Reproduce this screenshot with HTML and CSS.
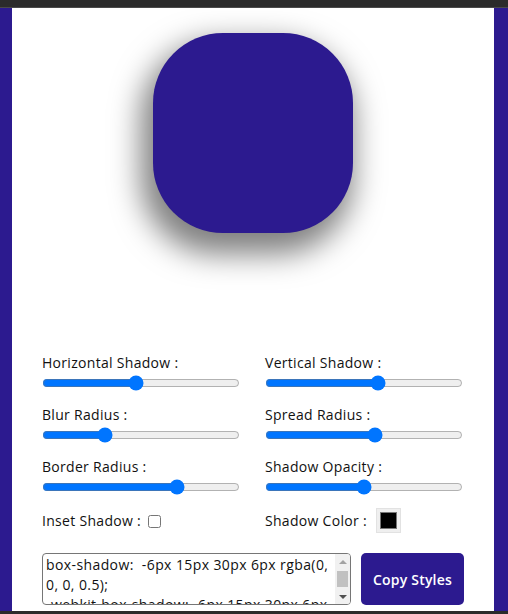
FILE: index.html
```html
<!DOCTYPE html>
<html lang="en">
<head>
<meta charset="utf-8">
<title>Box Shadow Generator</title>
<link rel="stylesheet" href="styles.css">
</head>
<body>
<div class="chrome chrome-top"></div>
<main class="page">
  <div class="card">
    <section class="preview">
      <div class="box"></div>
    </section>
    <section class="controls">
      <div class="control">
        <label class="label" for="h">Horizontal Shadow :</label>
        <input class="range" id="h" type="range" min="-100" max="100" value="-6">
      </div>
      <div class="control">
        <label class="label" for="v">Vertical Shadow :</label>
        <input class="range" id="v" type="range" min="-100" max="100" value="15">
      </div>
      <div class="control">
        <label class="label" for="b">Blur Radius :</label>
        <input class="range" id="b" type="range" min="0" max="100" value="30">
      </div>
      <div class="control">
        <label class="label" for="s">Spread Radius :</label>
        <input class="range" id="s" type="range" min="-50" max="50" value="6">
      </div>
      <div class="control">
        <label class="label" for="r">Border Radius :</label>
        <input class="range" id="r" type="range" min="0" max="100" value="70">
      </div>
      <div class="control">
        <label class="label" for="o">Shadow Opacity :</label>
        <input class="range" id="o" type="range" min="0" max="1" step="0.1" value="0.5">
      </div>
      <div class="control inline">
        <label class="label" for="i">Inset Shadow :</label>
        <input class="check" id="i" type="checkbox">
      </div>
      <div class="control inline">
        <label class="label" for="c">Shadow Color :</label>
        <input class="color" id="c" type="color" value="#000000">
      </div>
    </section>
    <section class="output">
      <div class="code-wrap">
        <textarea class="code" rows="2" readonly>box-shadow:  -6px 15px 30px 6px rgba(0, 0, 0, 0.5);
-webkit-box-shadow: -6px 15px 30px 6px rgba(0, 0, 0, 0.5);
-moz-box-shadow: -6px 15px 30px 6px rgba(0, 0, 0, 0.5);</textarea>
        <div class="scrollbar" aria-hidden="true">
          <span class="sb-btn sb-up"></span>
          <span class="sb-track"><span class="sb-thumb"></span></span>
          <span class="sb-btn sb-down"></span>
        </div>
      </div>
      <button class="copy" type="button">Copy Styles</button>
    </section>
  </div>
</main>
<div class="chrome chrome-bottom"></div>
</body>
</html>
```
FILE: styles.css
```css
* { box-sizing: border-box; }
html, body { margin: 0; padding: 0; }
body {
  font-family: "Open Sans", "DejaVu Sans", sans-serif;
  color: #111;
  background: #2c1a8f;
  height: 614px;
  overflow: hidden;
  display: flex;
  flex-direction: column;
}
.chrome { background: #2b2b2b; flex: none; }
.chrome-top { height: 8px; border-bottom: 1px solid #4a4a4a; }
.chrome-bottom { height: 3px; }
.page {
  flex: 1;
  padding: 0 14px 0 12px;
  background: #2c1a8f;
  display: flex;
}
.card {
  flex: 1;
  background: #fff;
  padding: 25px 30px 0 30px;
  display: flex;
  flex-direction: column;
  overflow: hidden;
}
.preview {
  display: flex;
  justify-content: center;
  margin-bottom: 119px;
}
.box {
  width: 200px;
  height: 200px;
  background: #2c1a8f;
  border-radius: 70px;
  box-shadow: -6px 15px 30px 6px rgba(0, 0, 0, 0.5);
}
.controls {
  display: grid;
  grid-template-columns: 198px 198px;
  column-gap: 25px;
  row-gap: 11px;
}
.control { display: flex; flex-direction: column; }
.control.inline { flex-direction: row; align-items: center; }
.label {
  font-size: 14px;
  line-height: 21px;
  letter-spacing: 0.3px;
}
.range {
  width: 198px;
  margin: 2px 0;
  accent-color: #0075ff;
}
.check {
  width: 13px;
  height: 13px;
  margin: 1px 0 0 7px;
}
.color {
  width: 25px;
  height: 25px;
  margin: 0 0 0 9px;
  padding: 3px;
  border: 1px solid #e2e2e2;
  background: #efefef;
  border-radius: 0;
}
.color::-webkit-color-swatch-wrapper { padding: 0; }
.color::-webkit-color-swatch { border: 1px solid #777; }
.output {
  margin-top: 20px;
  display: flex;
  gap: 10px;
  align-items: flex-start;
}
.code-wrap {
  position: relative;
  width: 309px;
  height: 52px;
  flex: none;
}
.code {
  display: block;
  width: 309px;
  height: 52px;
  resize: none;
  font-family: "Open Sans", "DejaVu Sans", sans-serif;
  font-size: 14px;
  letter-spacing: 0.4px;
  line-height: 20px;
  color: #111;
  border: 1px solid #767676;
  border-radius: 4px;
  padding: 1px 18px 1px 3px;
  overflow: hidden;
}
.scrollbar {
  position: absolute;
  top: 1px;
  right: 1px;
  bottom: 1px;
  width: 15px;
  background: #f1f1f1;
  border-radius: 0 3px 3px 0;
  display: flex;
  flex-direction: column;
}
.sb-btn {
  height: 15px;
  flex: none;
  display: flex;
  align-items: center;
  justify-content: center;
}
.sb-btn::before {
  content: "";
  width: 0;
  height: 0;
  border-left: 4px solid transparent;
  border-right: 4px solid transparent;
}
.sb-up::before { border-bottom: 4px solid #a3a3a3; }
.sb-down::before { border-top: 4px solid #505050; }
.sb-track {
  flex: 1;
  padding: 2px 2px 0;
}
.sb-thumb {
  display: block;
  height: 16px;
  background: #c1c1c1;
}
.copy {
  width: 103px;
  height: 52px;
  border: none;
  border-radius: 5px;
  background: #2c1a8f;
  color: #fff;
  font-family: "Open Sans", "DejaVu Sans", sans-serif;
  font-size: 14px;
  font-weight: 600;
  letter-spacing: 0.2px;
}
```
